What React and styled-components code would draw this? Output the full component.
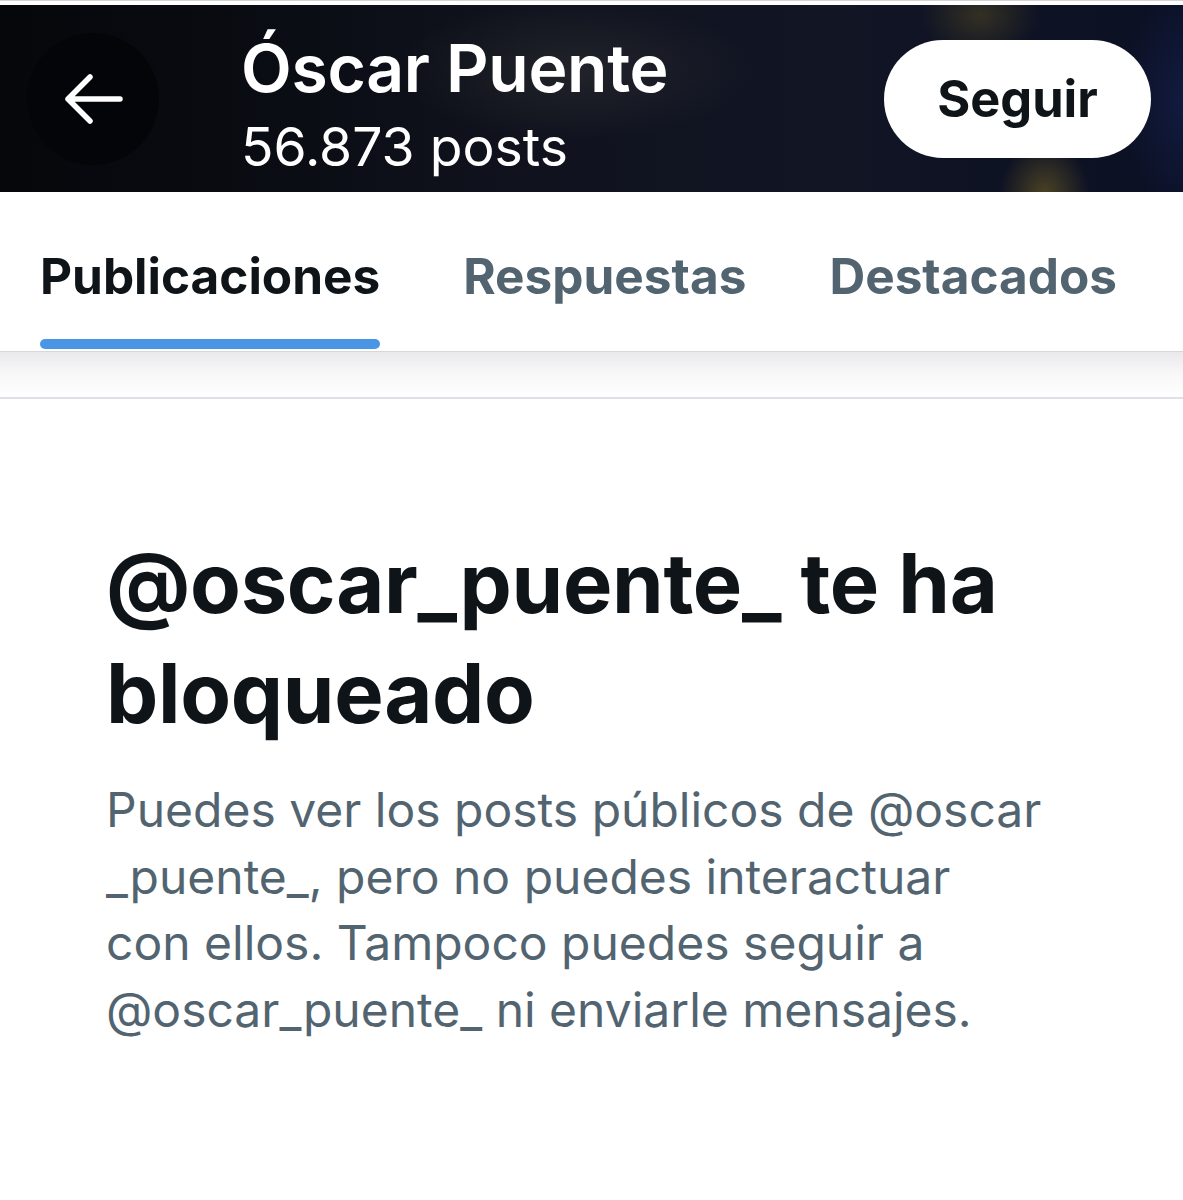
import React from "react";
import styled, { createGlobalStyle } from "styled-components";

const GlobalStyle = createGlobalStyle`
  html, body {
    margin: 0;
    padding: 0;
    background: #ffffff;
  }
  body {
    font-family: Inter, "Liberation Sans", Arial, sans-serif;
    -webkit-font-smoothing: antialiased;
  }
`;

const Page = styled.div`
  width: 1183px;
  min-height: 1200px;
  padding-top: 4px;
  box-sizing: border-box;
  background: #ffffff;
  border-top: 1px solid #d4d4d4;
`;

const Header = styled.header`
  height: 187px;
  display: flex;
  align-items: center;
  padding: 0 32px 0 27px;
  box-sizing: border-box;
  background:
    radial-gradient(ellipse 60px 45px at 980px 10px, rgba(110, 95, 35, 0.38), transparent),
    radial-gradient(ellipse 45px 55px at 1045px 190px, rgba(150, 125, 35, 0.45), transparent),
    radial-gradient(ellipse 70px 120px at 1190px 95px, rgba(30, 45, 110, 0.4), transparent),
    radial-gradient(ellipse 180px 70px at 575px 65px, rgba(95, 90, 80, 0.22), transparent),
    linear-gradient(90deg, #06070b 0%, #090b11 18%, #10131e 45%, #111524 70%, #0b1024 100%);
`;

const BackButton = styled.button`
  width: 132px;
  height: 132px;
  flex: none;
  border: none;
  border-radius: 50%;
  background: rgba(4, 5, 8, 0.85);
  display: flex;
  align-items: center;
  justify-content: center;
  padding: 0;
  cursor: pointer;
`;

const TitleBlock = styled.div`
  margin-left: 82px;
  display: flex;
  flex-direction: column;
  color: #ffffff;
  padding-top: 14px;
`;

const Name = styled.div`
  font-size: 66px;
  font-weight: 600;
  line-height: 82px;
  letter-spacing: -0.3px;
`;

const PostCount = styled.div`
  font-size: 53.5px;
  font-weight: 400;
  line-height: 76px;
`;

const FollowButton = styled.button`
  margin-left: auto;
  width: 267px;
  height: 118px;
  border: none;
  border-radius: 59px;
  background: #ffffff;
  color: #0f1419;
  font-family: inherit;
  font-size: 50.5px;
  font-weight: 700;
  cursor: pointer;
`;

const TabBar = styled.nav`
  height: 159px;
  display: flex;
  gap: 83px;
  padding: 0 40px;
  box-sizing: border-box;
  background: #ffffff;
`;

const Tab = styled.div`
  display: flex;
  flex-direction: column;
  padding-top: 53px;
  font-size: 49.5px;
  font-weight: 700;
  line-height: 62px;
  color: ${p => (p.$active ? "#0f1419" : "#536471")};
`;

const Indicator = styled.div`
  margin-top: auto;
  margin-bottom: 2px;
  height: 10px;
  border-radius: 5px;
  background: #4a95e6;
`;

const Divider = styled.div`
  height: 45px;
  border-top: 1px solid #d6d7db;
  border-bottom: 2px solid #dfe0e5;
  background: linear-gradient(#e9e9ec 0%, #f7f7f8 45%, #ffffff 100%);
`;

const Notice = styled.section`
  padding: 129px 0 0 106px;
`;

const Heading = styled.h1`
  margin: 0;
  max-width: 1000px;
  font-size: 83px;
  font-weight: 700;
  line-height: 110px;
  color: #0f1419;
  letter-spacing: -0.3px;
`;

const Body = styled.p`
  margin: 29px 0 0;
  font-size: 48px;
  line-height: 66.7px;
  color: #536471;
`;

const ArrowLeft = () => (
  <svg width="60" height="50" viewBox="0 0 60 50" fill="none">
    <path
      d="M57 25H5M27 3L5 25l22 22"
      stroke="#ffffff"
      strokeWidth="5.5"
      strokeLinecap="round"
      strokeLinejoin="round"
    />
  </svg>
);

const tabs = ["Publicaciones", "Respuestas", "Destacados"];

export default function App() {
  return (
    <Page>
      <GlobalStyle />
      <Header>
        <BackButton aria-label="Volver">
          <ArrowLeft />
        </BackButton>
        <TitleBlock>
          <Name>Óscar Puente</Name>
          <PostCount>56.873 posts</PostCount>
        </TitleBlock>
        <FollowButton>Seguir</FollowButton>
      </Header>

      <TabBar>
        {tabs.map((t, i) => (
          <Tab key={t} $active={i === 0}>
            {t}
            {i === 0 && <Indicator />}
          </Tab>
        ))}
      </TabBar>
      <Divider />

      <Notice>
        <Heading>@oscar_puente_ te ha bloqueado</Heading>
        <Body>
          Puedes ver los posts públicos de @oscar
          <br />
          _puente_, pero no puedes interactuar
          <br />
          con ellos. Tampoco puedes seguir a
          <br />
          @oscar_puente_ ni enviarle mensajes.
        </Body>
      </Notice>
    </Page>
  );
}
